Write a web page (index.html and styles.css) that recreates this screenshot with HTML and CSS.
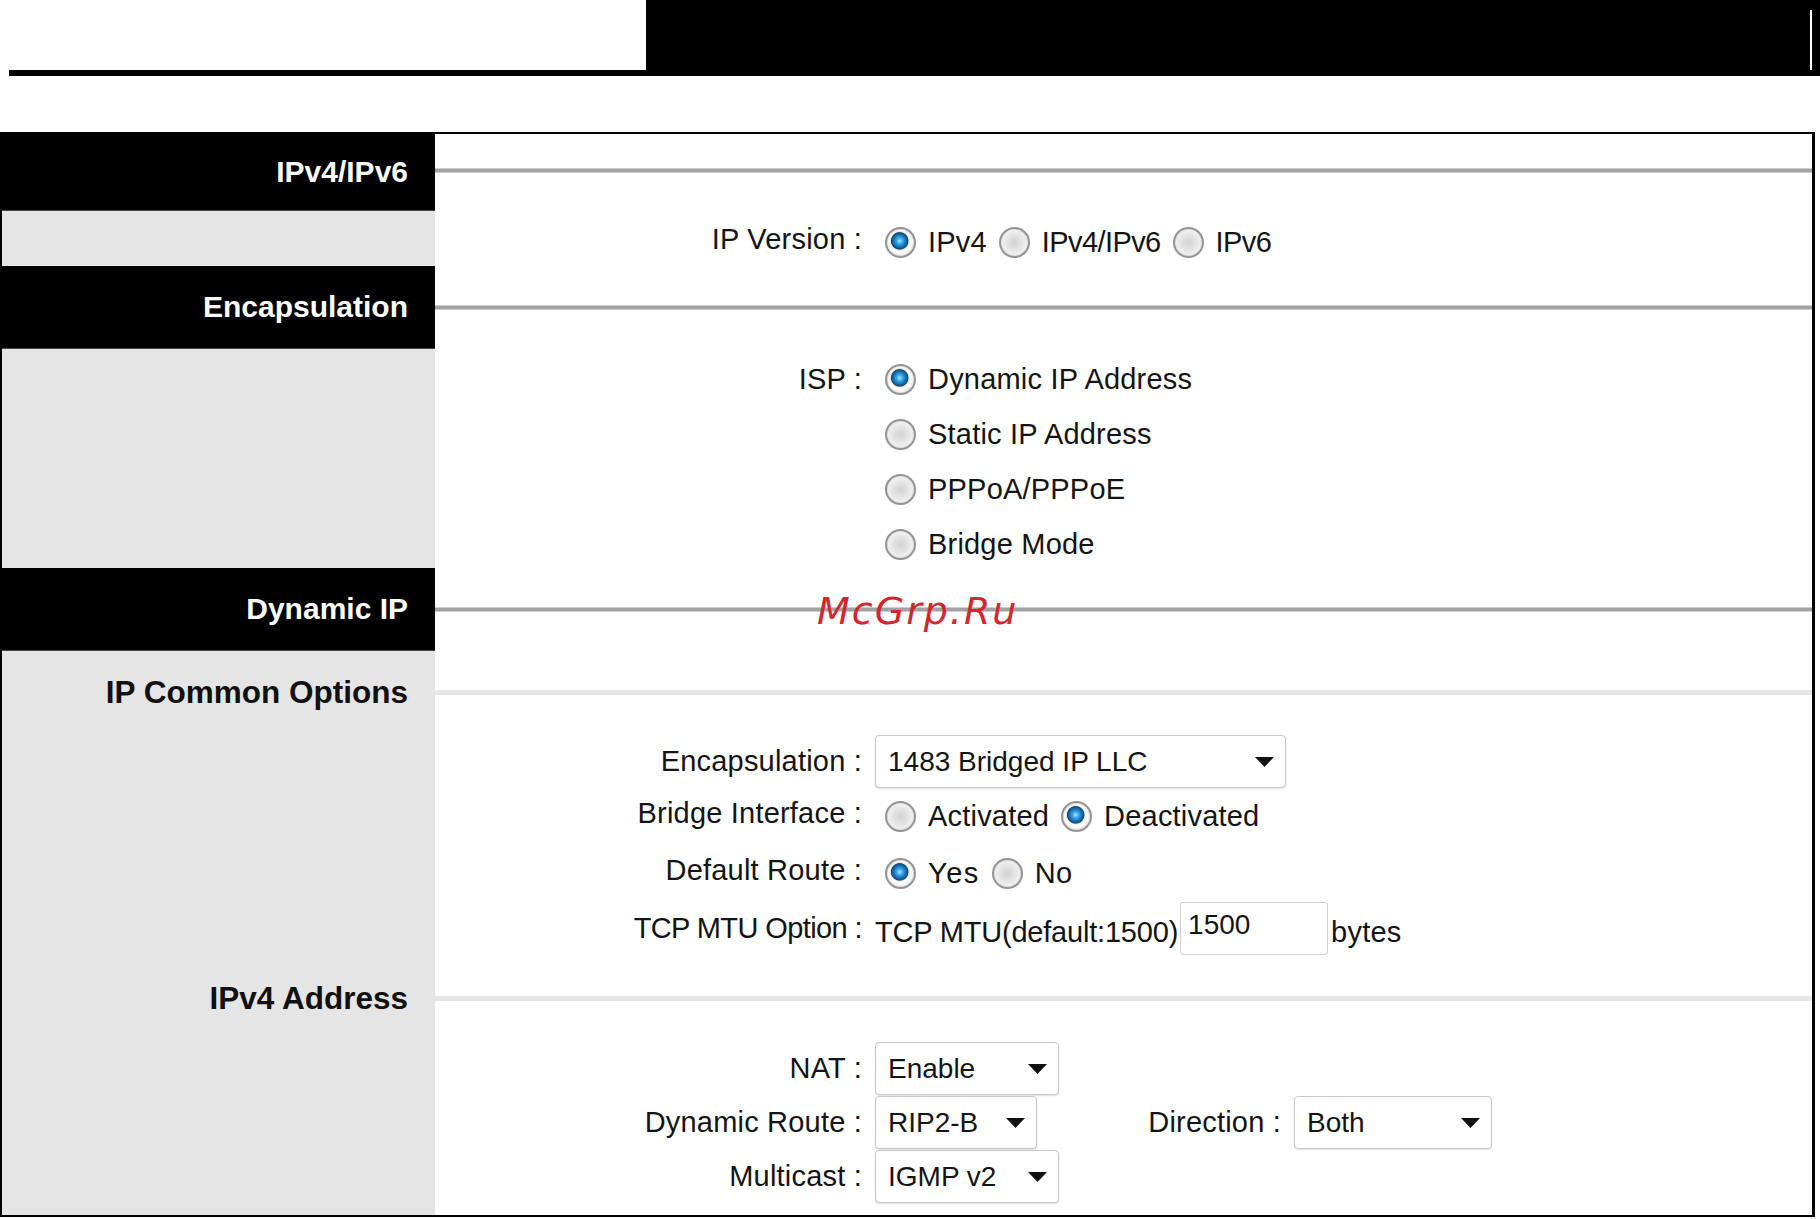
FILE: index.html
```html
<!DOCTYPE html>
<html>
<head>
<meta charset="UTF-8">
<link rel="stylesheet" href="styles.css">
</head>
<body>
<div class="banner">
	<div class="banner-left"></div>
	<div class="banner-right"><div class="banner-edge"></div></div>
</div>

<div class="frame">
	<!-- IPv4/IPv6 -->
	<div class="side head">IPv4/IPv6</div>
	<div class="main rule first"><div class="line"></div></div>

	<div class="side"></div>
	<div class="main ipver">
		<div class="field">
			<span class="field-label up">IP Version :</span>
			<div class="choices">
				<label class="opt"><input type="radio" name="ipver" checked>IPv4</label>
				<label class="opt tight"><input type="radio" name="ipver">IPv4/IPv6</label>
				<label class="opt tight"><input type="radio" name="ipver">IPv6</label>
			</div>
		</div>
	</div>

	<!-- Encapsulation -->
	<div class="side head">Encapsulation</div>
	<div class="main rule"><div class="line"></div></div>

	<div class="side"></div>
	<div class="main isp">
		<div class="field top">
			<span class="field-label up">ISP :</span>
			<div class="stack">
				<label class="opt"><input type="radio" name="isp" checked>Dynamic IP Address</label>
				<label class="opt"><input type="radio" name="isp">Static IP Address</label>
				<label class="opt"><input type="radio" name="isp">PPPoA/PPPoE</label>
				<label class="opt"><input type="radio" name="isp">Bridge Mode</label>
			</div>
		</div>
	</div>

	<!-- Dynamic IP -->
	<div class="side head">Dynamic IP</div>
	<div class="main rule mark"><div class="line"></div><span class="watermark">McGrp.Ru</span></div>

	<div class="side sub">IP Common Options</div>
	<div class="main rule"><div class="line light"></div></div>

	<div class="side"></div>
	<div class="main common">
		<div class="field h54">
			<span class="field-label">Encapsulation :</span>
			<span class="sel w-encap">
				<select><option>1483 Bridged IP LLC</option></select>
				<svg class="caret" width="19" height="10" viewBox="0 0 19 10"><path d="M0 0h19L9.5 10z"/></svg>
			</span>
		</div>
		<div class="field h57">
			<span class="field-label up">Bridge Interface :</span>
			<div class="choices">
				<label class="opt"><input type="radio" name="bridge">Activated</label>
				<label class="opt"><input type="radio" name="bridge" checked>Deactivated</label>
			</div>
		</div>
		<div class="field h56">
			<span class="field-label up">Default Route :</span>
			<div class="choices">
				<label class="opt wide"><input type="radio" name="defroute" checked>Yes</label>
				<label class="opt"><input type="radio" name="defroute">No</label>
			</div>
		</div>
		<div class="field h54">
			<span class="field-label tight">TCP MTU Option :</span>
			<span class="mtu-text">TCP MTU(default:1500)</span>
			<input type="text" class="mtu" value="1500">
			<span class="unit">bytes</span>
		</div>
	</div>

	<div class="side sub">IPv4 Address</div>
	<div class="main rule"><div class="line light"></div></div>

	<div class="side"></div>
	<div class="main ipv4">
		<div class="field h54">
			<span class="field-label">NAT :</span>
			<span class="sel w-nat">
				<select><option>Enable</option></select>
				<svg class="caret" width="19" height="10" viewBox="0 0 19 10"><path d="M0 0h19L9.5 10z"/></svg>
			</span>
		</div>
		<div class="field h54">
			<span class="field-label">Dynamic Route :</span>
			<span class="sel w-route">
				<select><option>RIP2-B</option></select>
				<svg class="caret" width="19" height="10" viewBox="0 0 19 10"><path d="M0 0h19L9.5 10z"/></svg>
			</span>
			<span class="dir-label">Direction :</span>
			<span class="sel w-dir">
				<select><option>Both</option></select>
				<svg class="caret" width="19" height="10" viewBox="0 0 19 10"><path d="M0 0h19L9.5 10z"/></svg>
			</span>
		</div>
		<div class="field h54">
			<span class="field-label">Multicast :</span>
			<span class="sel w-nat">
				<select><option>IGMP v2</option></select>
				<svg class="caret" width="19" height="10" viewBox="0 0 19 10"><path d="M0 0h19L9.5 10z"/></svg>
			</span>
		</div>
	</div>
</div>
</body>
</html>
```

FILE: styles.css
```css
* {
	margin: 0;
	padding: 0;
	box-sizing: border-box;
}
body {
	font-family: 'Liberation Sans', Arial, sans-serif;
	font-size: 29px;
	letter-spacing: 0.2px;
	color: #141414;
	background: #fff;
	width: 1820px;
}

/* top banner */
.banner {
	display: flex;
	height: 76px;
}
.banner-left {
	width: 637px;
	margin-left: 9px;
	border-bottom: 6px solid #000;
}
.banner-right {
	flex: 1;
	background: #000;
	padding: 10px 8px 6px 0;
	display: flex;
	justify-content: flex-end;
}
.banner-edge {
	width: 2px;
	background: #fff;
}

/* main frame */
.frame {
	margin-top: 56px;
	width: 1815px;
	border: 2px solid #000;
	border-right-width: 3px;
	display: grid;
	grid-template-columns: 433px 1fr;
	grid-template-rows: 77px 55px 83px 219px 83px 82px 225px 80px 177px;
}
.side {
	background: #e5e5e5;
	display: flex;
	align-items: center;
	justify-content: flex-end;
	padding-right: 27px;
	font-size: 30px;
	font-weight: bold;
	letter-spacing: 0;
	color: #111;
}
.side.sub {
	font-size: 31.5px;
}
.side.head {
	background: #000;
	color: #fff;
	border-bottom: 1px solid #444;
}

.main.rule {
	display: flex;
	align-items: center;
}
.main.first {
	padding-bottom: 4px;
}
.main.mark {
	position: relative;
}
.line {
	width: 100%;
	height: 5px;
	background: #a2a2a2;
	border-top: 1px solid #cdcdcd;
	border-bottom: 1px solid #cdcdcd;
}
.line.light {
	background: #e6e6e6;
	border: 0;
}
.watermark {
	position: absolute;
	left: 382px;
	top: 24px;
	font-family: 'DejaVu Sans', Verdana, sans-serif;
	font-style: italic;
	font-size: 38px;
	line-height: 38px;
	letter-spacing: 2px;
	color: #d4262c;
}

/* form rows */
.ipver {
	padding-top: 7px;
	display: flex;
	align-items: center;
}
.isp {
	padding-top: 3px;
}
.common {
	padding-top: 1px;
}
.ipv4 {
	padding-top: 3px;
}
.field {
	display: flex;
	align-items: center;
}
.field.top {
	align-items: flex-start;
}
.field.top .field-label {
	line-height: 55px;
}
.h54 { height: 54px; }
.h56 { height: 56px; }
.h57 { height: 57px; }

.field-label {
	width: 427px;
	margin-right: 13px;
	text-align: right;
	white-space: nowrap;
}
.field-label.up {
	padding-bottom: 6px;
}
.tight {
	letter-spacing: -0.6px;
}
.choices {
	display: flex;
	align-items: center;
}
.stack {
	display: flex;
	flex-direction: column;
}
.stack .opt {
	height: 55px;
}
.opt {
	display: inline-flex;
	align-items: center;
	margin-right: 2px;
	white-space: nowrap;
}
.opt.wide {
	letter-spacing: 1.5px;
}

/* radio like the old windows one */
.opt input {
	-webkit-appearance: none;
	appearance: none;
	width: 31px;
	height: 31px;
	margin: 0 12px 0 10px;
	border-radius: 50%;
	border: 2px solid #949494;
	box-shadow: inset 0 0 0 1px #e0e0e0;
	background: radial-gradient(circle, #d2d2d2 0, #e4e4e4 40%, #f2f2f2 68%, #ffffff 100%);
}
.opt input:checked {
	background: radial-gradient(circle at 47% 44%, #a4e4ff 0, #35a3e6 16%, #1068aa 32%, #1d4767 40%, #dde4e8 44%, #ffffff 50%, #eeeeee 74%, #d2d2d2 100%);
}

/* selects */
.sel {
	position: relative;
	display: inline-block;
	height: 53px;
}
.sel select {
	-webkit-appearance: none;
	appearance: none;
	width: 100%;
	height: 53px;
	padding-left: 12px;
	font-family: 'Liberation Sans', Arial, sans-serif;
	font-size: 28px;
	color: #141414;
	background: #fff;
	border: 1px solid #c8c8c8;
	border-radius: 4px;
	box-shadow: 0 1px 2px rgba(0, 0, 0, 0.12);
}
.caret {
	position: absolute;
	right: 12px;
	top: 22px;
	fill: #111;
}
.w-encap { width: 411px; }
.w-nat { width: 184px; }
.w-route { width: 162px; }
.w-dir { width: 198px; }

.dir-label {
	width: 244px;
	margin-right: 13px;
	text-align: right;
}

.mtu-text {
	letter-spacing: -0.2px;
	margin-top: 8px;
}
.mtu {
	width: 148px;
	height: 53px;
	margin-left: 2px;
	padding: 0 7px 6px;
	font-family: 'Liberation Sans', Arial, sans-serif;
	font-size: 28px;
	color: #141414;
	border: 1px solid #cfcfcf;
	border-radius: 3px;
}
.unit {
	margin-left: 3px;
	margin-top: 8px;
}
```
